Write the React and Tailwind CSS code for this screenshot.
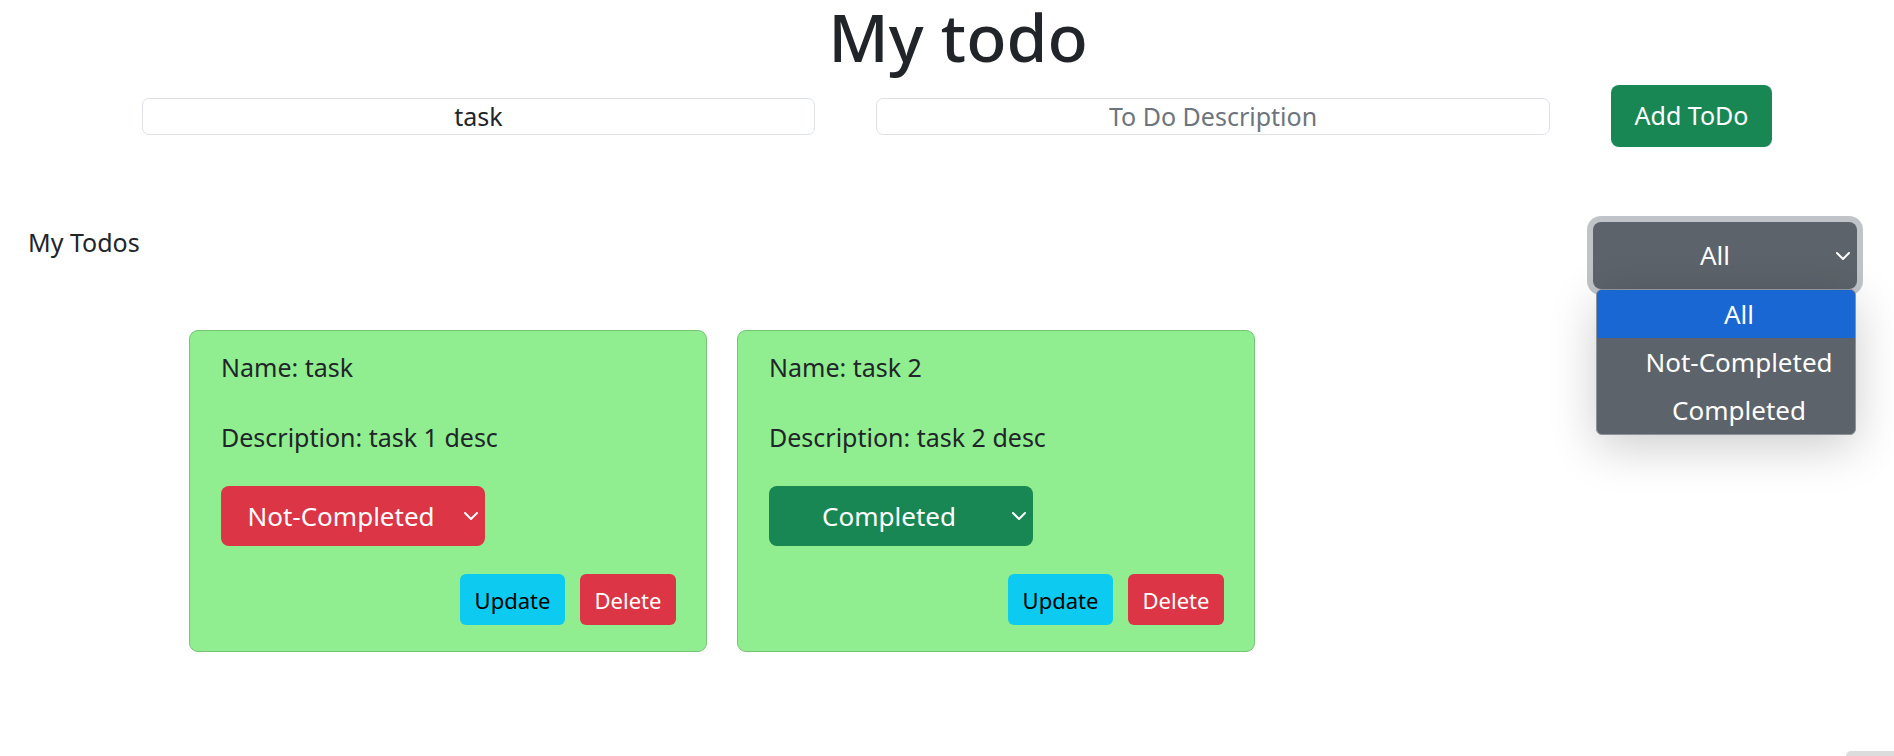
import { useState } from 'react'

const todos = [
  { id: 1, name: 'task', description: 'task 1 desc', status: 'Not-Completed' },
  { id: 2, name: 'task 2', description: 'task 2 desc', status: 'Completed' },
]

function Chevron() {
  return (
    <svg
      viewBox="0 0 16 16"
      className="absolute right-[6px] top-1/2 -translate-y-1/2 w-[16px] h-[16px]"
      fill="none"
      stroke="#fff"
      strokeWidth="2"
      strokeLinecap="round"
      strokeLinejoin="round"
    >
      <path d="m2 5 6 6 6-6" />
    </svg>
  )
}

function TodoCard({ todo }) {
  const done = todo.status === 'Completed'
  return (
    <div className="w-[518px] rounded-[9px] border border-[#74c474] bg-[#90ee90] pl-[31px] pr-[30px] pt-[18px] pb-[26px] flex flex-col">
      <p className="text-[25px] leading-[37.5px] mb-[32px]">Name: {todo.name}</p>
      <p className="text-[25px] leading-[37.5px] mb-[30px]">Description: {todo.description}</p>
      <div
        className={`relative w-[264px] h-[60px] rounded-[8px] flex items-center justify-center pl-[14px] pr-[38px] text-[26px] text-white ${
          done ? 'bg-[#198754]' : 'bg-[#dc3545]'
        }`}
      >
        {todo.status}
        <Chevron />
      </div>
      <div className="mt-[28px] flex justify-end gap-[15px]">
        <button className="w-[105px] h-[51px] rounded-[6px] bg-[#0dcaf0] text-black text-[22px] pt-[1px]">Update</button>
        <button className="w-[96px] h-[51px] rounded-[6px] bg-[#dc3545] text-white text-[22px] pt-[1px]">Delete</button>
      </div>
    </div>
  )
}

export default function App() {
  const [filter] = useState('All')
  const options = ['All', 'Not-Completed', 'Completed']

  return (
    <div className="min-h-[756px] bg-white text-[#212529] font-['Noto_Sans',sans-serif]">
      {/* Title */}
      <h1 className="text-center text-[66px] leading-[72px] font-medium pl-[22px]">My todo</h1>

      {/* Add form */}
      <div className="mt-[13px] flex items-center gap-[61px] pl-[142px]">
        <input
          defaultValue="task"
          className="w-[673px] h-[37px] rounded-[7px] border border-[#dee2e6] text-center text-[25px] leading-none text-[#212529] outline-none"
        />
        <input
          placeholder="To Do Description"
          className="w-[674px] h-[37px] rounded-[7px] border border-[#dee2e6] text-center text-[25px] leading-none placeholder:text-[#6c757d] outline-none"
        />
        <button className="w-[161px] h-[62px] rounded-[8px] bg-[#198754] text-white text-[25px]">Add ToDo</button>
      </div>

      {/* Header row */}
      <div className="mt-[75px] flex justify-between items-start pl-[28px] pr-[37px]">
        <h3 className="text-[25px] leading-[37.5px] mt-[2px]">My Todos</h3>
        <div className="relative">
          <div className="relative w-[264px] h-[67px] rounded-[8px] bg-[#5c636a] shadow-[0_0_0_6px_rgba(130,138,145,0.5)] flex items-center justify-center pl-[16px] pr-[36px] text-[26px] text-white">
            {filter}
            <Chevron />
          </div>
          {/* Open dropdown */}
          <div className="absolute top-full left-[3px] w-[260px] rounded-[6px] border border-[#8d9298] bg-[#5c636a] overflow-hidden shadow-[0_12px_48px_rgba(0,0,0,0.2)] z-10">
            {options.map((opt) => (
              <div
                key={opt}
                className={`h-[48px] flex items-center justify-center pl-[26px] text-[26px] text-white ${
                  opt === filter ? 'bg-[#1967d2]' : ''
                }`}
              >
                {opt}
              </div>
            ))}
          </div>
        </div>
      </div>

      {/* Cards */}
      <div className="mt-[41px] flex gap-[30px] pl-[189px]">
        {todos.map((todo) => (
          <TodoCard key={todo.id} todo={todo} />
        ))}
      </div>

      {/* scrollbar thumb corner */}
      <div className="fixed right-0 bottom-0 w-[48px] h-[5px] rounded-tl-full bg-[#dcdcdc]" />
    </div>
  )
}
